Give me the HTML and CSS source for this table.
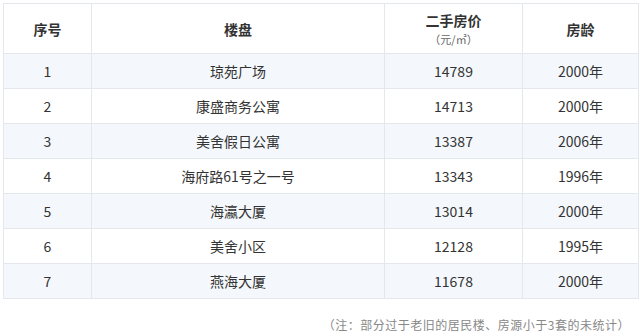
FILE: index.html
```html
<!DOCTYPE html>
<html>
<head lang="zh">
    <meta charset="UTF-8">
    <title>二手房价</title>
    <link rel="stylesheet" href="styles.css">
</head>
<body>
<div class="wrap">
    <table class="price-table">
        <thead>
            <tr>
                <th class="c-no">序号</th>
                <th class="c-name">楼盘</th>
                <th class="c-price">二手房价<span class="unit">（元/㎡）</span></th>
                <th class="c-age">房龄</th>
            </tr>
        </thead>
        <tbody>
            <tr><td>1</td><td>琼苑广场</td><td>14789</td><td>2000年</td></tr>
            <tr><td>2</td><td>康盛商务公寓</td><td>14713</td><td>2000年</td></tr>
            <tr><td>3</td><td>美舍假日公寓</td><td>13387</td><td>2006年</td></tr>
            <tr><td>4</td><td>海府路61号之一号</td><td>13343</td><td>1996年</td></tr>
            <tr><td>5</td><td>海瀛大厦</td><td>13014</td><td>2000年</td></tr>
            <tr><td>6</td><td>美舍小区</td><td>12128</td><td>1995年</td></tr>
            <tr><td>7</td><td>燕海大厦</td><td>11678</td><td>2000年</td></tr>
        </tbody>
    </table>
    <p class="note">（注：部分过于老旧的居民楼、房源小于3套的未统计）</p>
</div>
</body>
</html>
```

FILE: styles.css
```css
* { margin: 0; padding: 0; }
body {
    background: #fff;
    font-family: "Noto Sans CJK SC", "Noto Sans", sans-serif;
    color: #333;
}
.wrap {
    padding: 3px 6px 0 3px;
}
.price-table {
    width: 631px;
    border-collapse: collapse;
    table-layout: fixed;
    font-size: 14px;
}
.price-table th,
.price-table td {
    border: 1px solid #e4e7eb;
    text-align: center;
    vertical-align: middle;
}
.price-table th {
    height: 49px;
    font-weight: bold;
    font-size: 14px;
    line-height: 20px;
    color: #333;
    background: #fff;
}
.price-table td {
    height: 34px;
    line-height: 20px;
}
.price-table tbody tr:nth-child(odd) td {
    background: #f4f8fc;
}
.c-no { width: 87px; }
.c-name { width: 292px; }
.c-price { width: 137px; }
.c-age { width: 115px; }
.unit {
    display: block;
    font-size: 11px;
    font-weight: normal;
    line-height: 18px;
    color: #666;
}
.note {
    margin-top: 16px;
    text-align: right;
    font-size: 12px;
    line-height: 20px;
    letter-spacing: 0.5px;
    color: #888;
    padding-right: 4px;
}
```
